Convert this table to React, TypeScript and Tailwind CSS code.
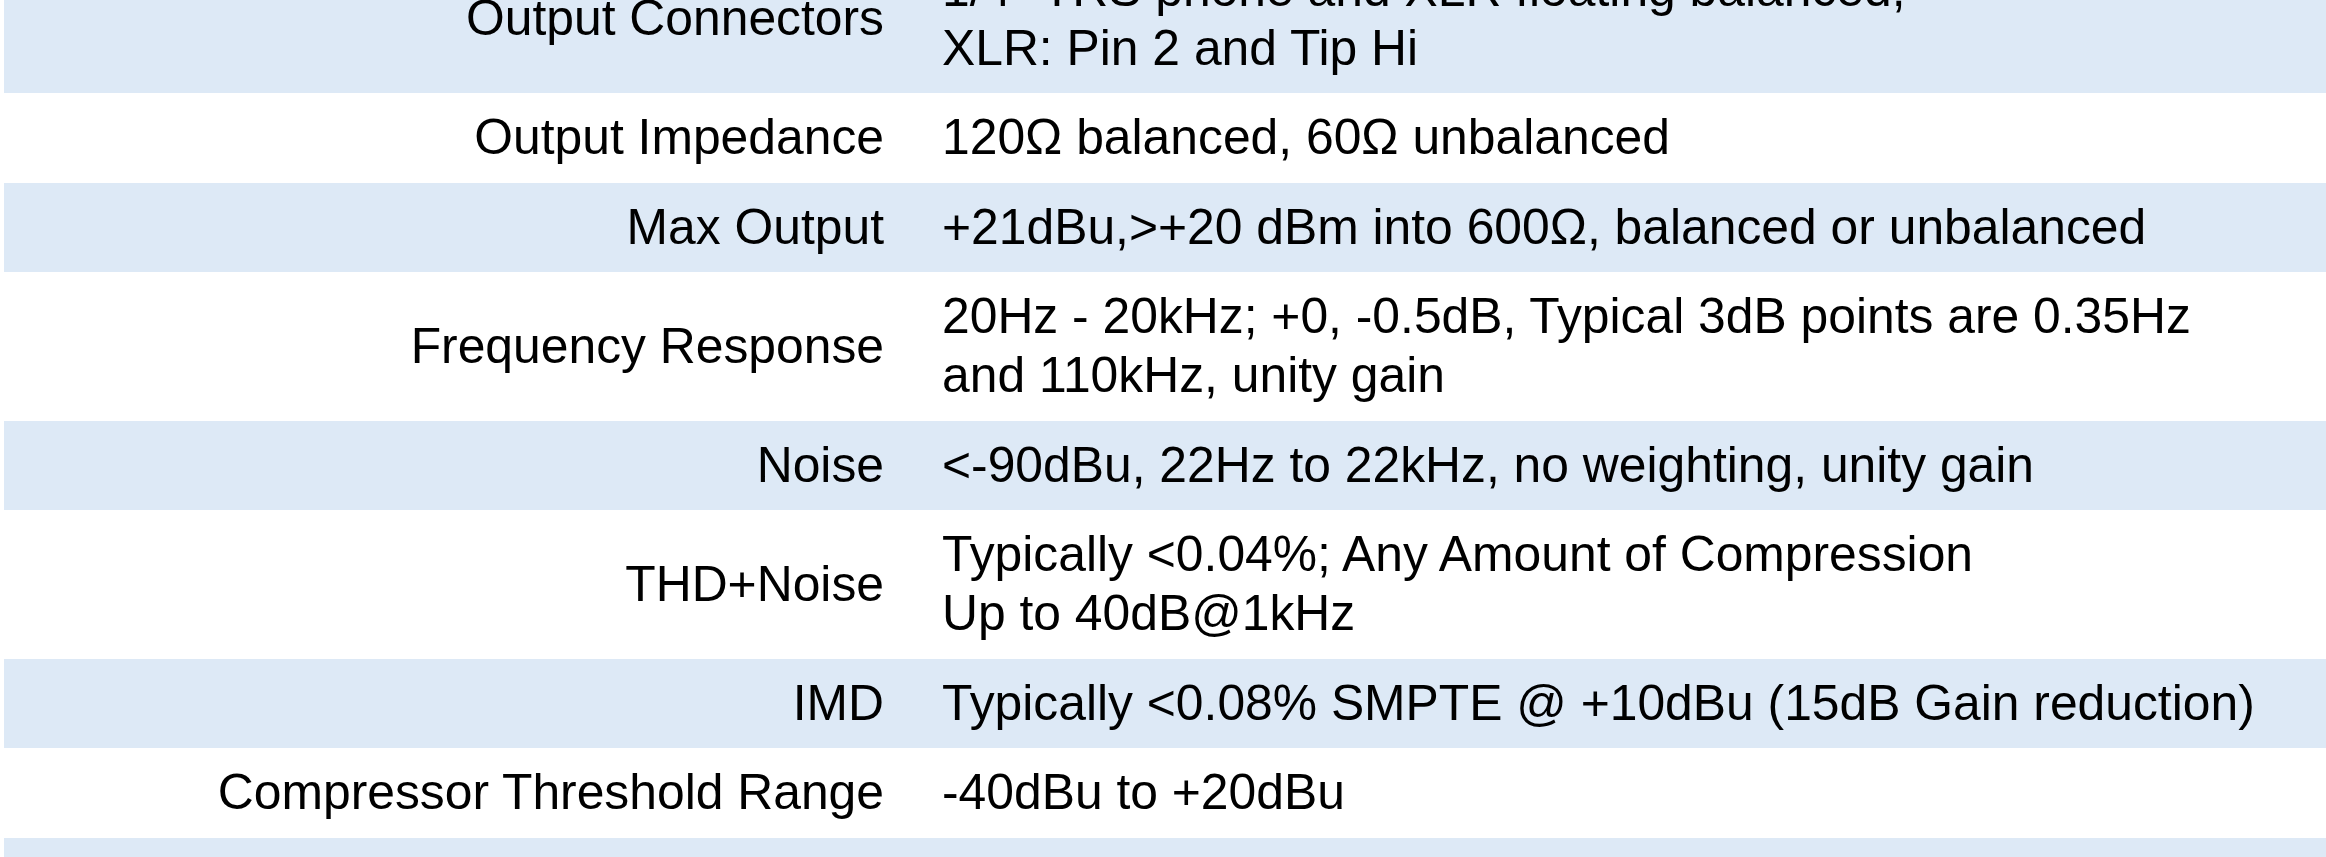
type Spec = {
  label: string;
  lines: string[];
};

const specs: Spec[] = [
  {
    label: "Output Connectors",
    lines: ['1/4" TRS phone and XLR floating balanced,', "XLR: Pin 2 and Tip Hi"],
  },
  { label: "Output Impedance", lines: ["120Ω balanced, 60Ω unbalanced"] },
  {
    label: "Max Output",
    lines: ["+21dBu,>+20 dBm into 600Ω, balanced or unbalanced"],
  },
  {
    label: "Frequency Response",
    lines: [
      "20Hz - 20kHz; +0, -0.5dB, Typical 3dB points are 0.35Hz",
      "and 110kHz, unity gain",
    ],
  },
  {
    label: "Noise",
    lines: ["<-90dBu, 22Hz to 22kHz, no weighting, unity gain"],
  },
  {
    label: "THD+Noise",
    lines: ["Typically <0.04%; Any Amount of Compression", "Up to 40dB@1kHz"],
  },
  {
    label: "IMD",
    lines: ["Typically <0.08% SMPTE @ +10dBu (15dB Gain reduction)"],
  },
  { label: "Compressor Threshold Range", lines: ["-40dBu to +20dBu"] },
  { label: "", lines: [""] },
];

export default function App() {
  return (
    <div className="h-[857px] overflow-hidden bg-white">
      <div
        className="mt-[-55.5px] pl-1 text-[49.8px] leading-[59px] text-black"
        style={{ fontFamily: '"Liberation Sans", Arial, sans-serif' }}
      >
        {specs.map((spec, index) => (
          <div
            key={index}
            className={`flex py-[15.25px] ${
              index % 2 === 0 ? "bg-[#dde9f6]" : "bg-white"
            }`}
          >
            <div className="flex w-[909px] shrink-0 items-center justify-end whitespace-nowrap pr-[29px]">
              {spec.label}
            </div>
            <div className="flex min-h-[59px] flex-col whitespace-nowrap pl-[29px]">
              {spec.lines.map((line, i) => (
                <span key={i}>{line}</span>
              ))}
            </div>
          </div>
        ))}
      </div>
    </div>
  );
}
